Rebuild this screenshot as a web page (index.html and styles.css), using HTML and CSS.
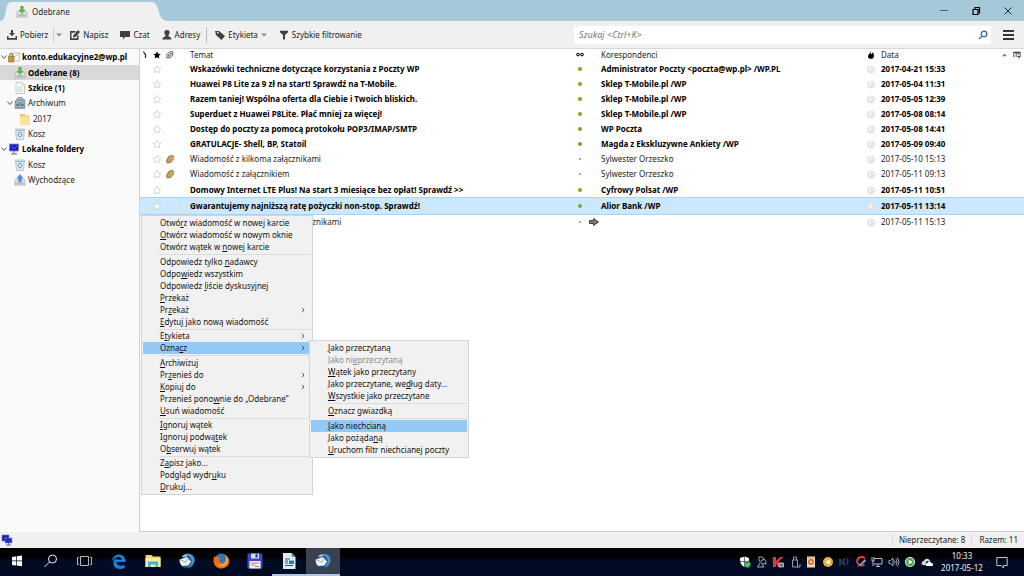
FILE: index.html
```html
<!DOCTYPE html>
<html lang="pl">
<head>
<meta charset="utf-8">
<title>Odebrane</title>
<link rel="stylesheet" href="styles.css">
</head>
<body>
<svg class="defs" aria-hidden="true">
  <symbol id="inbox" viewBox="0 0 12 12"><path d="M1 7 2 5h8l1 2v4H1z" fill="#dfe3e6" stroke="#9aa4ab" stroke-width=".7"/><path d="M2.500 9h7" stroke="#8b99a8"/><path d="M4.700 0h2.600v4H9L6 7.500 3 4h1.700z" fill="#5fb94a" stroke="#3f9a35" stroke-width=".4"/></symbol>
  <symbol id="outbox" viewBox="0 0 12 12"><path d="M1 7 2 5h8l1 2v4H1z" fill="#dfe3e6" stroke="#9aa4ab" stroke-width=".7"/><path d="M2.500 9h7" stroke="#8b99a8"/><path d="M4.700 7.500h2.600V4H9L6 .5 3 4h1.700z" fill="#4f8fe0" stroke="#2d62ba" stroke-width=".4"/></symbol>
  <symbol id="draft" viewBox="0 0 12 12"><path d="M2 .5h6l2.500 2.500v8.500H2z" fill="#f7f7f7" stroke="#b5b5b5" stroke-width=".7"/><path d="M8 .5V3h2.500M3.500 5h5M3.500 7h5M3.500 9h5" fill="none" stroke="#c4c4c4" stroke-width=".7"/></symbol>
  <symbol id="archive" viewBox="0 0 12 12"><path d="M1 4 3 2h7l1 2v7.500H1z" fill="#9eb0bb" stroke="#71838e" stroke-width=".6"/><path d="M4 .5h4v10H4z" fill="#b8c8d2" stroke="#5f7380" stroke-width=".6"/><path d="M5 3h2M5 6h2M2 8h8" stroke="#3c607b"/></symbol>
  <symbol id="folder" viewBox="0 0 12 12"><path d="M1 1h4.500l1 1.500h4V11.500H1z" fill="#eec865"/><path d="M1 3.500h8l2.500 8H1z" fill="#fbe29a"/></symbol>
  <symbol id="trash" viewBox="0 0 12 12"><path d="M1.500 1h9l-1 10.500h-7z" fill="#dceaf2" stroke="#9fb4c0" stroke-width=".7"/><path d="M1.500 2.500h9" stroke="#a4bac6"/><path d="M4.200 5.500 6 4l1.800 1.500v2L6 9 4.200 7.500z" fill="none" stroke="#4a90cf" stroke-width=".9"/></symbol>
  <symbol id="screens" viewBox="0 0 12 12"><path d="M1 1h7v6H1z" fill="#1a22b8" stroke="#777a9a" stroke-width=".6"/><path d="M4 4h7v5H4z" fill="#1c28d4" stroke="#8f92ad" stroke-width=".6"/><path d="M5 11h5M7.500 9v2" stroke="#666a88"/></symbol>
  <symbol id="computer" viewBox="0 0 12 12"><path d="M1.500 1h9v7h-9z" fill="#1a20c4" stroke="#8587a8" stroke-width=".8"/><path d="M3 2.500 6 6l3-3" stroke="#4c57ff" fill="none"/><path d="M6 8v2M3 10.800h6" stroke="#777a90" stroke-width="1.300"/></symbol>
  <symbol id="account" viewBox="0 0 12 12"><path d="M3 2h8.500v8H3z" fill="#f4f4f1" stroke="#aaa" stroke-width=".6"/><path d="m3 2 4 4 4.500-4" fill="none" stroke="#aaa" stroke-width=".6"/><path d="M.5 5.500H6V11H.5z" fill="#c8943b" stroke="#8d6322" stroke-width=".6"/><path d="M1.700 5.500V4a1.500 1.500 0 0 1 3 0v1.500" fill="none" stroke="#8d6322"/></symbol>
  <symbol id="star" viewBox="0 0 10 10"><path d="m5 1.300 1.200 2.500 2.600.4-1.900 1.900.5 2.700L5 7.500 2.600 8.800l.5-2.700-1.900-1.900 2.600-.4z" fill="#fff" stroke="#cdcdcd" stroke-width=".8"/></symbol>
  <symbol id="clip" viewBox="0 0 10 10"><path d="M1 7 3.500 2.500 7 1l2 1.500-.5 3L6 8.500 2.500 9.300z" fill="#b58c45" stroke="#a07a38" stroke-width=".6"/><path d="m3 7 3-3.800 1.500.3-.5 1.800L5 7.500" fill="none" stroke="#e8cf96" stroke-width=".8"/></symbol>
  <symbol id="junk" viewBox="0 0 10 10"><circle cx="5" cy="5.500" r="3.600" fill="#e6e6e6" stroke="#d6d6d6" stroke-width=".6"/><path d="M4.500 1 5 4.500M3.500 4v3M5.500 6l1.500-1.500" stroke="#fff" stroke-width=".9"/></symbol>
  <symbol id="chev" viewBox="0 0 8 8"><path d="m1.500 2.500 2.500 3 2.500-3" fill="none" stroke="#444" stroke-width=".9"/></symbol>
  <symbol id="more" viewBox="0 0 4 6"><path d="m1 .8 2 2.200-2 2.200" fill="none" stroke="#333" stroke-width=".8"/></symbol>
  <symbol id="caret" viewBox="0 0 6 4"><path d="M0 .5h6L3 3.500z" fill="#8a8a8a"/></symbol>
  <symbol id="bird" viewBox="0 0 18 18"><path d="M5 3C8 .5 13 .5 15.500 4c2.500 4 .5 9-3 11.500C9 17.500 4.500 16 3 13z" fill="#1d4a85"/><path d="M7 3.500C11 0 16.500 3 16.500 8c0 4-3 7-6 7.500 3-3 4-7 2-9.500-1.500-2-3.500-2.500-5.500-2.500z" fill="#4b91cd"/><path d="M1.500 7.500 9 5l4 4.500-2.500 4-6 .5C2.500 13 1.500 10.500 1.500 7.500z" fill="#eef1f4"/><path d="m2 7.500 5.500 2.800L10.500 6" fill="none" stroke="#93a0ae" stroke-width=".9"/><path d="M4 5c1-2 3-3 5.500-2.500L8 5z" fill="#a9b7c6"/></symbol>
</svg>

<header class="titlebar">
  <div class="tab">
    <svg class="tab-left" viewBox="0 0 12 19"><path d="M0 19C5 18 5 13 6 8 7 3 8 0 12 0v19z"/></svg>
    <div class="tab-body"><svg class="i12"><use href="#inbox"/></svg><span>Odebrane</span></div>
    <svg class="tab-right" viewBox="0 0 16 19"><path d="M0 0c5 0 6 4 8 10 1 5 3 8 8 9H0z"/></svg>
  </div>
  <div class="window-controls">
    <button aria-label="Minimalizuj"><svg viewBox="0 0 10 10"><path d="M1 4.500h8" stroke="#4c626d" fill="none"/></svg></button>
    <button aria-label="Przywróć"><svg viewBox="0 0 10 10"><path d="M2 3.500h5v5H2zM4 3V1.500h4.500V7H7.500" stroke="#000" stroke-width="1.200" fill="none"/></svg></button>
    <button aria-label="Zamknij"><svg viewBox="0 0 10 10"><path d="m1.500 1.500 7 7m0-7-7 7" stroke="#1a2a33" fill="none"/></svg></button>
  </div>
</header>

<div class="toolbar">
  <button class="tool"><svg class="i10" viewBox="0 0 10 10"><path d="M4 0h2v3h2L5 6.300 2 3h2z"/><path d="M0 6h1.500v2h7V6H10v3.700H0z"/></svg>Pobierz</button>
  <button class="drop" aria-label="Opcje pobierania"><svg><use href="#caret"/></svg></button>
  <button class="tool write"><svg class="i10" viewBox="0 0 10 10"><path d="M0 1h6L4.500 2.800h-3v5.500h5.500V6l1.500-1.500V10H0z"/><path d="M8 0 10 2 5.500 7 3 7.500 3.500 5z"/></svg>Napisz</button>
  <button class="tool chat"><svg class="i10" viewBox="0 0 10 10"><path d="M0 1h10v6H5L3 9.500V7H0z"/></svg>Czat</button>
  <button class="tool book"><svg class="i10" viewBox="0 0 10 10"><path d="M5 0c4 0 2.500 4.500 1.300 5.500 0 1.500 3.200 1 3.200 4H.5c0-3 3.200-2.500 3.200-4C2.500 4.500 1 0 5 0z"/></svg>Adresy</button>
  <button class="tool tag"><svg class="i10" viewBox="0 0 10 10"><path d="M0 1h4l6 5-3.500 4L1 5zM2 2v1.500h1.500V2z" fill-rule="evenodd"/></svg>Etykieta <svg class="caret"><use href="#caret"/></svg></button>
  <button class="tool filter"><svg class="i10" viewBox="0 0 10 10"><path d="M1 .8h8v1.500L6 5v4.500H4V5L1 2.300z"/></svg>Szybkie filtrowanie</button>
  <div class="search"><input type="search" aria-label="Szukaj" placeholder="Szukaj &lt;Ctrl+K&gt;"><svg viewBox="0 0 10 10"><circle cx="6" cy="4" r="2.800"/><path d="M4 6 1 9"/></svg></div>
  <button class="burger" aria-label="Menu"><svg viewBox="0 0 12 10"><path d="M0 1h11M0 5h11M0 9h11"/></svg></button>
</div>

<main class="main">
  <nav class="folders">
    <a href="#" class="root bold"><svg class="chev"><use href="#chev"/></svg><svg class="i12"><use href="#account"/></svg>konto.edukacyjne2@wp.pl</a>
    <a href="#" class="sub bold selected"><svg class="i12"><use href="#inbox"/></svg>Odebrane (8)</a>
    <a href="#" class="sub bold"><svg class="i12"><use href="#draft"/></svg>Szkice (1)</a>
    <a href="#" class="open"><svg class="chev"><use href="#chev"/></svg><svg class="i12"><use href="#archive"/></svg>Archiwum</a>
    <a href="#" class="deep"><svg class="i12"><use href="#folder"/></svg>2017</a>
    <a href="#" class="sub"><svg class="i12"><use href="#trash"/></svg>Kosz</a>
    <a href="#" class="root bold"><svg class="chev"><use href="#chev"/></svg><svg class="i12"><use href="#computer"/></svg>Lokalne foldery</a>
    <a href="#" class="sub"><svg class="i12"><use href="#trash"/></svg>Kosz</a>
    <a href="#" class="sub"><svg class="i12"><use href="#outbox"/></svg>Wychodzące</a>
  </nav>

  <section class="messages">
    <table>
      <colgroup><col class="c-thread"><col class="c-star"><col class="c-clip"><col><col class="c-read"><col class="c-from"><col class="c-junk"><col class="c-date"></colgroup>
      <thead><tr>
        <th><svg class="i8" viewBox="0 0 8 8"><path d="M2 1c2 0 1 2 2.500 2.500M4.500 3v4" fill="none" stroke="#222" stroke-width="1.200"/></svg></th>
        <th><svg class="i8" viewBox="0 0 10 10"><path d="m5 .3 1.400 3 3.300.4-2.400 2.300.6 3.400L5 7.800 2.100 9.400 2.700 6 .3 3.700l3.300-.4z"/></svg></th>
        <th><svg class="i8" viewBox="0 0 10 10"><path d="M1 4.500 4.500 1H8.500V5L5 8.500H1zM3 6.500V5l2-2h1.500v1.500l-2 2z" fill="none" stroke="#333"/></svg></th>
        <th class="subject">Temat</th>
        <th><svg class="i8" viewBox="0 0 10 10"><circle cx="2.500" cy="4.500" r="1.600" fill="none" stroke="#111" stroke-width="1.300"/><circle cx="7.500" cy="4.500" r="1.600" fill="none" stroke="#111" stroke-width="1.300"/></svg></th>
        <th class="from">Korespondenci</th>
        <th><svg class="i8" viewBox="0 0 10 10"><path d="M4.500 0c1 1.500-.5 3 .8 4C6.500 3.500 6.500 2 7 1.500 10 5 9 9.800 5 9.800S0 6 3 3.500c1-1 1.500-2 1.500-3.500z"/></svg></th>
        <th class="date"><div class="date-head"><span>Data</span><svg class="sort" viewBox="0 0 6 4"><path d="M0 3.500 3 .5l3 3z" fill="#3c87c8"/></svg><svg class="i8" viewBox="0 0 10 10"><path d="M1 7.500V1.500h8V6M1 2h8M4 2v5.500M6.500 2v3M5.500 7h4M7.500 9.500V6" fill="none" stroke="#222"/></svg></div></th>
      </tr></thead>
      <tbody>
        <tr class="unread"><td></td><td><svg class="i10"><use href="#star"/></svg></td><td></td><td class="subject">Wskazówki techniczne dotyczące korzystania z Poczty WP</td><td><i class="dot"></i></td><td class="from">Administrator Poczty &lt;poczta@wp.pl&gt; /WP.PL</td><td><svg class="i10"><use href="#junk"/></svg></td><td class="date">2017-04-21 15:33</td></tr>
        <tr class="unread"><td></td><td><svg class="i10"><use href="#star"/></svg></td><td></td><td class="subject">Huawei P8 Lite za 9 zł na start! Sprawdź na T-Mobile.</td><td><i class="dot"></i></td><td class="from">Sklep T-Mobile.pl /WP</td><td><svg class="i10"><use href="#junk"/></svg></td><td class="date">2017-05-04 11:31</td></tr>
        <tr class="unread"><td></td><td><svg class="i10"><use href="#star"/></svg></td><td></td><td class="subject">Razem taniej! Wspólna oferta dla Ciebie i Twoich bliskich.</td><td><i class="dot"></i></td><td class="from">Sklep T-Mobile.pl /WP</td><td><svg class="i10"><use href="#junk"/></svg></td><td class="date">2017-05-05 12:39</td></tr>
        <tr class="unread"><td></td><td><svg class="i10"><use href="#star"/></svg></td><td></td><td class="subject">Superduet z Huawei P8Lite. Płać mniej za więcej!</td><td><i class="dot"></i></td><td class="from">Sklep T-Mobile.pl /WP</td><td><svg class="i10"><use href="#junk"/></svg></td><td class="date">2017-05-08 08:14</td></tr>
        <tr class="unread"><td></td><td><svg class="i10"><use href="#star"/></svg></td><td></td><td class="subject">Dostęp do poczty za pomocą protokołu POP3/IMAP/SMTP</td><td><i class="dot"></i></td><td class="from">WP Poczta</td><td><svg class="i10"><use href="#junk"/></svg></td><td class="date">2017-05-08 14:41</td></tr>
        <tr class="unread"><td></td><td><svg class="i10"><use href="#star"/></svg></td><td></td><td class="subject">GRATULACJE- Shell, BP, Statoil</td><td><i class="dot"></i></td><td class="from">Magda z Ekskluzywne Ankiety /WP</td><td><svg class="i10"><use href="#junk"/></svg></td><td class="date">2017-05-09 09:40</td></tr>
        <tr><td></td><td><svg class="i10"><use href="#star"/></svg></td><td><svg class="i10"><use href="#clip"/></svg></td><td class="subject">Wiadomość z kilkoma załącznikami</td><td><i class="dot"></i></td><td class="from">Sylwester Orzeszko</td><td><svg class="i10"><use href="#junk"/></svg></td><td class="date">2017-05-10 15:13</td></tr>
        <tr><td></td><td><svg class="i10"><use href="#star"/></svg></td><td><svg class="i10"><use href="#clip"/></svg></td><td class="subject">Wiadomość z załącznikiem</td><td><i class="dot"></i></td><td class="from">Sylwester Orzeszko</td><td><svg class="i10"><use href="#junk"/></svg></td><td class="date">2017-05-11 09:13</td></tr>
        <tr class="unread"><td></td><td><svg class="i10"><use href="#star"/></svg></td><td></td><td class="subject">Domowy Internet LTE Plus! Na start 3 miesiące bez opłat! Sprawdź &gt;&gt;</td><td><i class="dot"></i></td><td class="from">Cyfrowy Polsat /WP</td><td><svg class="i10"><use href="#junk"/></svg></td><td class="date">2017-05-11 10:51</td></tr>
        <tr class="unread current"><td></td><td><svg class="i10"><use href="#star"/></svg></td><td></td><td class="subject">Gwarantujemy najniższą ratę pożyczki non-stop. Sprawdź!</td><td><i class="dot"></i></td><td class="from">Alior Bank /WP</td><td><svg class="i10"><use href="#junk"/></svg></td><td class="date">2017-05-11 13:14</td></tr>
        <tr><td></td><td><svg class="i10"><use href="#star"/></svg></td><td></td><td class="subject">Odp: Wiadomość z kilkoma załącznikami</td><td><i class="dot"></i></td><td class="reply"><svg class="i10" viewBox="0 0 10 10"><path d="M.5 3.500h4v-2L9.500 5 4.500 8.500v-2h-4z" fill="#777" stroke="#333" stroke-width=".9"/></svg></td><td><svg class="i10"><use href="#junk"/></svg></td><td class="date">2017-05-11 15:13</td></tr>
      </tbody>
    </table>

    <div class="menu context" role="menu">
      <button role="menuitem">Otwó<u>r</u>z wiadomość w nowej karcie</button>
      <button role="menuitem"><u>O</u>twórz wiadomość w nowym oknie</button>
      <button role="menuitem">Otwórz wątek w <u>n</u>owej karcie</button>
      <hr>
      <button role="menuitem">Odpowiedz tylko <u>n</u>adawcy</button>
      <button role="menuitem">Odpo<u>w</u>iedz wszystkim</button>
      <button role="menuitem">Odpowiedz <u>l</u>iście dyskusyjnej</button>
      <button role="menuitem"><u>P</u>rzekaż</button>
      <button role="menuitem">Pr<u>z</u>ekaż<svg class="more"><use href="#more"/></svg></button>
      <button role="menuitem"><u>E</u>dytuj jako nową wiadomość</button>
      <hr class="tight">
      <button role="menuitem">E<u>t</u>ykieta<svg class="more"><use href="#more"/></svg></button>
      <div class="branch">
        <button role="menuitem" class="active">Ozna<u>c</u>z<svg class="more"><use href="#more"/></svg></button>
        <div class="menu submenu" role="menu">
          <button role="menuitem"><u>J</u>ako przeczytaną</button>
          <button role="menuitem" disabled>Jako ni<u>e</u>przeczytaną</button>
          <button role="menuitem"><u>W</u>ątek jako przeczytany</button>
          <button role="menuitem">Jako przeczytane, we<u>d</u>ług daty...</button>
          <button role="menuitem"><u>W</u>szystkie jako przeczytane</button>
          <hr>
          <button role="menuitem"><u>O</u>znacz gwiazdką</button>
          <hr>
          <button role="menuitem" class="active"><u>J</u>ako niechcianą</button>
          <button role="menuitem">Jako pożąda<u>n</u>ą</button>
          <button role="menuitem"><u>U</u>ruchom filtr niechcianej poczty</button>
        </div>
      </div>
      <hr>
      <button role="menuitem"><u>A</u>rchiwizuj</button>
      <button role="menuitem">Pr<u>z</u>enieś do<svg class="more"><use href="#more"/></svg></button>
      <button role="menuitem"><u>K</u>opiuj do<svg class="more"><use href="#more"/></svg></button>
      <button role="menuitem">Przenieś pono<u>w</u>nie do „Odebrane”</button>
      <button role="menuitem"><u>U</u>suń wiadomość</button>
      <hr class="tight">
      <button role="menuitem"><u>I</u>gnoruj wątek</button>
      <button role="menuitem">Ignoruj podwą<u>t</u>ek</button>
      <button role="menuitem">O<u>b</u>serwuj wątek</button>
      <hr class="tight">
      <button role="menuitem">Z<u>a</u>pisz jako...</button>
      <button role="menuitem">Podgląd wydr<u>u</u>ku</button>
      <button role="menuitem"><u>D</u>rukuj...</button>
    </div>
  </section>
</main>

<footer class="status">
  <svg class="i12"><use href="#screens"/></svg>
  <span class="unread-count">Nieprzeczytane: 8</span><span class="total">Razem: 11</span>
</footer>

<div class="taskbar">
  <div class="apps">
    <button aria-label="Start"><svg viewBox="0 0 18 18"><path d="m4 5 4-.7v4.200H4zm4.700-.8L14 3.500v5H8.700zM4 9.300h4v4.200L4 13zm4.700 0H14v5l-5.300-.7z" fill="#fff"/></svg></button>
    <button aria-label="Szukaj w systemie"><svg viewBox="0 0 18 18"><circle cx="10.500" cy="7" r="4" fill="none" stroke="#eee"/><path d="m7.500 10-5 5" stroke="#eee"/></svg></button>
    <button aria-label="Widok zadań"><svg viewBox="0 0 18 18"><path d="M4.500 4.500h8v9h-8zM3 5.500H1.500v7H3M14 5.500h1.500v7H14" fill="none" stroke="#ccc" stroke-width=".9"/></svg></button>
    <button aria-label="Edge"><svg viewBox="0 0 18 18"><path d="M2 9C2.500 1 15.500-.5 15.500 10H6.500c0 4 5 4.500 8 2.700V16C8 18.500 2.500 15.500 3.500 10c.4-2 2-3.500 4-4.200-.7.800-1 1.500-1 2h5C11.500 3.500 5 4.500 2 9z" fill="#1784dc"/></svg></button>
    <button aria-label="Eksplorator plików"><svg viewBox="0 0 18 18"><path d="M1.500 3h6L9 4.500h7.500V15h-15z" fill="#f2d373"/><path d="M1.500 6h15v9h-15z" fill="#fbe9a4"/><path d="M4 15V9.500h10V15h-2.500v-2.500h-5V15z" fill="#45b3d8"/></svg></button>
    <button aria-label="Thunderbird"><svg><use href="#bird"/></svg></button>
    <button aria-label="Firefox"><svg viewBox="0 0 18 18"><circle cx="9.500" cy="8.500" r="7" fill="#2a7ab8"/><path d="M2 4c1 1 2 1 4 1 2 0 2 1.500 1 2.500 0 3 3 4.500 6 2.500 1-2 1-5-1-7.500 6 2 6.500 8 3.500 11.500C11 18.500 2 17 1.500 9z" fill="#ef6a1d"/><path d="M14 4c2.500 3 2 7-.5 9-3 2.500-7 1-8-1 4 2 8-.5 8.500-4z" fill="#fdb32b"/></svg></button>
    <button aria-label="Kopia zapasowa"><svg viewBox="0 0 18 18"><path d="M1.500 1.500h14l1 1v14h-15z" fill="#3b48c8"/><path d="M5 1.500h8v5H5z" fill="#dadde8"/><path d="M9.500 2h2v3.500h-2z" fill="#293397"/><path d="M3.500 9h11v7.500h-11z" fill="#f5f2f2"/><path d="M5 11h8M5 13h4M9 14.500h4" stroke="#d77474"/></svg></button>
    <button class="running" aria-label="Writer"><svg viewBox="0 0 18 18"><path d="M3 1h8.500L15.500 5v12H3z" fill="#dceef4"/><path d="M11.500 1v4h4z" fill="#5c9fb8"/><path d="M5 7h5M5 9h3M5 11h3M5 13.500h8" stroke="#1e6482"/><path d="M9 8.500h5V12H9z" fill="#337d9c"/></svg></button>
    <button class="running focused" aria-label="Thunderbird, otwarte okno"><svg><use href="#bird"/></svg></button>
  </div>
  <div class="tray">
    <svg viewBox="0 0 12 12"><path d="M1 2 5.500.5 10 2c0 5-1 7-4.500 9C2 9 1 7 1 2z" fill="#fff"/><path d="M5.500.5V11M1 5.500h9" stroke="#333" stroke-width=".7"/><circle cx="8.500" cy="8.500" r="3.200" fill="#2da44e"/><path d="m7 8.500 1.200 1.200L10.200 7.500" fill="none" stroke="#fff" stroke-width=".8"/></svg>
    <svg viewBox="0 0 12 12"><path d="M3 1c4-1 7 3 7 7C5 8 2 5 3 1zM4 7 1.500 11H8L6 8" fill="none" stroke="#bbb" stroke-width=".9"/><path d="m5 5 3-2" stroke="#bbb"/></svg>
    <svg viewBox="0 0 12 12"><path d="M1 1h3v4l4-4h3.500L6.500 5.500 9 11H6L4 7.500V11H1z" fill="#d93a35"/><path d="M7 7h4.500v4H7z" fill="#777" stroke="#ddd" stroke-width=".7"/></svg>
    <svg viewBox="0 0 12 12"><path d="M3.500 4h5v7h-5zM4.500 4V1h3v3M8 11h3V8" fill="none" stroke="#aaa" stroke-width=".9"/></svg>
    <svg viewBox="0 0 12 12"><path d="M2 .5h8v11H2z" fill="#f3d7b2"/><circle cx="6" cy="6" r="2.200" fill="none" stroke="#d56b18" stroke-width="1.500"/><path d="M3 2h6" stroke="#e39d4e"/></svg>
    <svg viewBox="0 0 12 12"><circle cx="6" cy="6" r="5" fill="#e3ad47"/><path d="M8 3v6L3.500 6z" fill="#fff2cf"/></svg>
    <svg viewBox="0 0 12 12"><path d="M2 10V3l4 6V2M8 9c2-1 3-5 0-7" fill="none" stroke="#4f5668"/></svg>
    <svg viewBox="0 0 12 12"><path d="M10 2C5-1 1 3 2.500 7c1 3 5 3 7 1.500" fill="none" stroke="#e1402f" stroke-width="2"/><path d="m5 8 5-5 1 2-4.500 4L2 11z" fill="#8ba5cf"/></svg>
    <svg viewBox="0 0 12 12"><path d="M3 2.500h8v5.500H3M7 8v2.500M5 10.500h4M1 1v4h2V1M2 5v5" fill="none" stroke="#ccc" stroke-width=".9"/></svg>
    <svg viewBox="0 0 12 12"><path d="M1 4.500h1.500L5 2v8L2.500 7.500H1zM6.500 4.500q1 1.500 0 3M8 3q2 3 0 6M9.500 1.500q3 4.500 0 9" fill="none" stroke="#ccc" stroke-width=".8"/></svg>
    <svg viewBox="0 0 12 12"><circle cx="6" cy="6" r="5" fill="#eef7ee"/><circle cx="6" cy="6" r="3.900" fill="#36a845"/><path d="M4.700 3.500v5L8.700 6z" fill="#fff"/></svg>
    <svg viewBox="0 0 12 12"><path d="M1 8.500C0 6 2 5 3 5c1-3 5-3 6 0H7C5 5 4 7 5 9H2z" fill="#ddd"/><path d="M5 10c-1-2 .5-3 1.500-3C7 4.500 10 5 10 7c3 0 2.500 3 1 3z" fill="#fff"/></svg>
  </div>
  <div class="clock"><span>10:33</span><span>2017-05-12</span></div>
  <button class="notices" aria-label="Powiadomienia"><svg viewBox="0 0 12 12"><path d="M.8 1.500h10.400v8H7.500V12L5 9.500H.8z" fill="none" stroke="#ddd" stroke-width=".9"/></svg></button>
</div>
</body>
</html>
```
FILE: styles.css
```css
* { box-sizing: border-box; }

body {
  margin: 0;
  height: 100vh;
  display: flex;
  flex-direction: column;
  overflow: hidden;
  background: #f0f0f0;
  color: #1c1c1c;
  font: 8px/12px "Noto Sans", "Open Sans", sans-serif;
}

button, input {
  font: inherit;
  color: inherit;
  border: 0;
  margin: 0;
  padding: 0;
  background: none;
}

a { color: inherit; text-decoration: none; }
svg { flex: none; display: block; }

.defs { position: absolute; width: 0; height: 0; }
.i8 { width: 8px; height: 8px; }
.i10 { width: 10px; height: 10px; }
.i12 { width: 12px; height: 12px; }
.bold { font-weight: 700; color: #000; }

/* Title bar */
.titlebar {
  flex: none;
  height: 21px;
  display: flex;
  justify-content: space-between;
  background: #a6c9da;
}
.tab { display: flex; align-self: flex-end; height: 19px; }
.tab-left { width: 12px; height: 19px; fill: #f0f0f0; }
.tab-right { width: 16px; height: 19px; fill: #f0f0f0; }
.tab-body {
  width: 139px;
  padding-left: 4px;
  display: flex;
  align-items: center;
  gap: 4px;
  background: #f0f0f0;
}
.window-controls { display: flex; }
.window-controls button {
  width: 32px;
  display: flex;
  align-items: center;
  justify-content: center;
}
.window-controls svg { width: 10px; height: 10px; }

/* Toolbar */
.toolbar {
  flex: none;
  height: 28px;
  padding: 0 9px 0 7px;
  display: flex;
  align-items: center;
  border-bottom: 1px solid #d8d8d8;
}
.tool { display: flex; align-items: center; gap: 3px; white-space: nowrap; }
.tool svg { fill: #404040; }
.drop {
  margin-left: 5px;
  padding-left: 2px;
  height: 16px;
  display: flex;
  align-items: center;
  border-left: 1px solid #d0d0d0;
}
.drop svg, .caret { width: 6px; height: 4px; }
.write { margin-left: 8px; }
.chat, .book { margin-left: 12px; }
.tag {
  margin-left: 6px;
  padding-left: 8px;
  height: 16px;
  border-left: 1px solid #bbb;
}
.filter { margin-left: 12px; }
.search {
  width: 417px;
  height: 18px;
  margin-left: auto;
  padding: 0 3px 0 5px;
  display: flex;
  align-items: center;
  background: #fff;
}
.search input { flex: 1; min-width: 0; outline: 0; appearance: none; font-size: 9px; }
.search input::placeholder { color: #777; font-style: italic; opacity: 1; }
.search svg { width: 10px; height: 10px; fill: none; stroke: #2f6db5; stroke-width: 1.3; }
.burger { margin-left: 12px; }
.burger svg { width: 12px; height: 10px; stroke: #333; stroke-width: 2; }

/* Main area */
.main { flex: 1; min-height: 0; display: flex; }

.folders {
  flex: none;
  width: 140px;
  display: grid;
  grid-template-rows: repeat(3, 16px 15px 15px);
  align-content: start;
  background: #fafafa;
  border-right: 1px solid #cfcfcf;
}
.folders a { display: flex; align-items: center; gap: 2px; white-space: nowrap; }
.folders .chev { width: 8px; height: 8px; margin-right: -2px; }
.folders .root { padding-left: 0; }
.folders .open { padding-left: 6px; }
.folders .sub { padding-left: 14px; }
.folders .deep { padding-left: 19px; }
.folders .selected { background: #d9d9d9; }

.messages {
  flex: 1;
  min-width: 0;
  position: relative;
  background: #fff;
  border-bottom: 1px solid #cfcfcf;
}
table {
  width: 100%;
  height: 181px;
  table-layout: fixed;
  border-collapse: collapse;
}
.c-thread { width: 10px; }
.c-star { width: 14px; }
.c-clip, .c-read, .c-junk { width: 12px; }
.c-from { width: 279px; }
.c-date { width: 147px; }
thead tr { height: 12px; }
th, td {
  padding: 0;
  font-weight: 400;
  text-align: left;
  white-space: nowrap;
  line-height: 12px;
  vertical-align: middle;
}
th svg, td svg { margin: 0 auto; }
.subject { padding-left: 14px; }
.from { padding-left: 15px; }
.date { padding-left: 4px; }
.reply svg { margin: 0 0 0 3px; }
.date-head { display: flex; align-items: center; padding-right: 3px; }
.date-head span { flex: 1; }
.date-head .i8 { margin: 0 0 0 6px; }
.sort { width: 5px; height: 4px; margin: 0; }
.unread td { font-weight: 700; color: #000; }
.current td {
  background: #cce8ff;
  border-top: 1px solid #a9d4f5;
  border-bottom: 1px solid #a9d4f5;
}
.dot {
  display: block;
  width: 2px;
  height: 2px;
  margin: 0 auto;
  border-radius: 50%;
  background: #8795a3;
}
.unread .dot { width: 4px; height: 4px; background: #74ac1e; }

/* Menus */
.menu {
  position: absolute;
  padding: 1px;
  display: flex;
  flex-direction: column;
  background: #f1f1f1;
  border: 1px solid #d4d4d4;
  color: #111;
}
.context { left: 1px; top: 166px; width: 172px; }
.submenu { left: 100%; top: -2px; width: 160px; margin-left: -2px; }
.menu button {
  width: 100%;
  height: 12px;
  padding: 0 6px 0 17px;
  display: flex;
  align-items: center;
  text-align: left;
  white-space: pre;
  line-height: 12px;
}
.menu hr {
  width: auto;
  height: 3px;
  margin: 0 0 0 16px;
  border: 0;
  background: linear-gradient(#dcdcdc, #dcdcdc) 0 1px / 100% 1px no-repeat;
}
.menu .tight { height: 2px; }
.menu button.active { background: #91c9f7; }
.menu button:disabled { color: #8a8a8a; }
.more { width: 4px; height: 6px; margin-left: auto; }
.menu u { text-underline-offset: 1px; text-decoration-thickness: 1px; }
.branch { position: relative; }

/* Status bar */
.status {
  flex: none;
  height: 16px;
  padding: 0 6px 0 1px;
  display: flex;
  align-items: center;
}
.unread-count { margin-left: auto; padding: 0 6px; border-left: 1px solid #ddd; }
.total { padding-left: 7px; border-left: 1px solid #ddd; }

/* Taskbar */
.taskbar {
  flex: none;
  height: 28px;
  padding-right: 9px;
  display: flex;
  align-items: center;
  color: #f2f2f2;
  background: linear-gradient(#000 0 9px, #020b22 12px);
}
.apps { display: flex; height: 100%; }
.apps button {
  width: 34px;
  display: flex;
  align-items: center;
  justify-content: center;
  border-bottom: 2px solid transparent;
}
.apps svg { width: 18px; height: 18px; }
.apps .running { border-bottom-color: #a9c7ea; }
.apps .focused { background: #39404f; }
.tray { width: 198px; margin-left: auto; display: flex; justify-content: space-around; }
.tray svg { width: 12px; height: 12px; }
.clock {
  width: 54px;
  display: flex;
  flex-direction: column;
  text-align: center;
}
.notices { width: 26px; display: flex; justify-content: center; }
.notices svg { width: 12px; height: 12px; }
```
